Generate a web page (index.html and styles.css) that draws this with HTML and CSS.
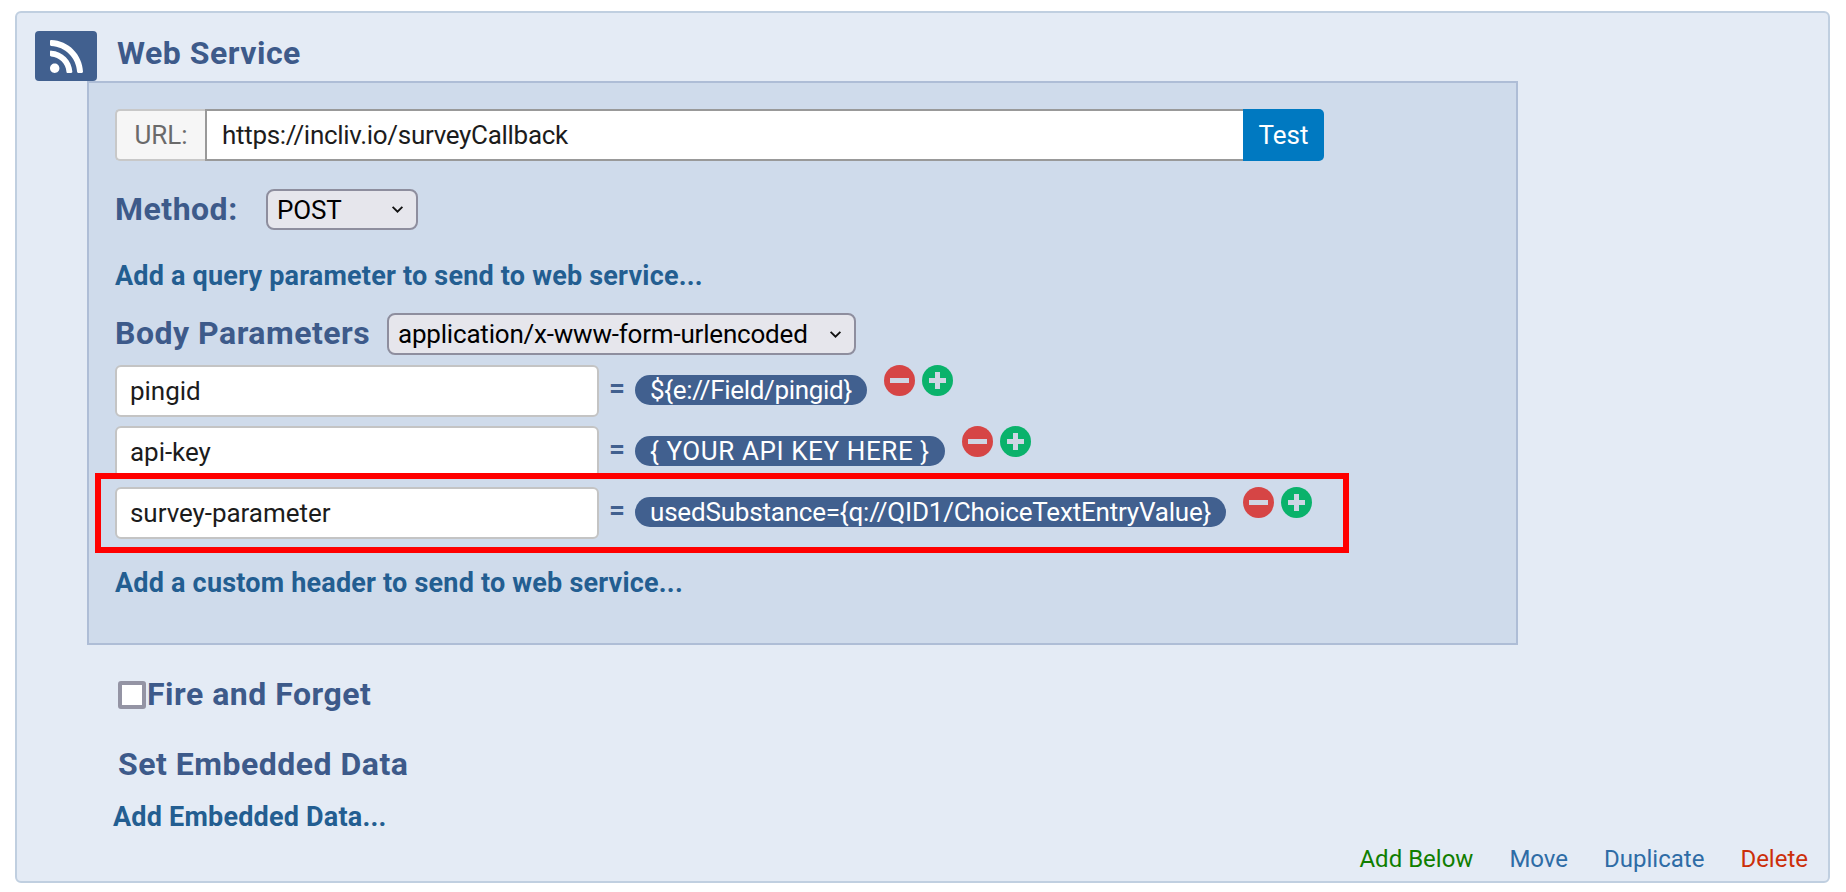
FILE: index.html
```html
<!DOCTYPE html>
<html lang="en">
<head>
<meta charset="utf-8">
<title>Web Service</title>
<link rel="stylesheet" href="styles.css">
</head>
<body>
<section class="card">
  <header class="card-head">
    <span class="logo"><svg viewBox="0 32 448 448" width="33" height="33"><path fill="#fff" d="M128.081 415.959c0 35.369-28.672 64.041-64.041 64.041S0 451.328 0 415.959s28.672-64.041 64.041-64.041 64.04 28.673 64.04 64.041zm175.66 47.25c-8.354-154.6-132.185-278.587-286.95-286.95C7.656 175.765 0 183.105 0 192.253v48.069c0 8.415 6.49 15.472 14.887 16.018 111.832 7.284 201.473 96.702 208.772 208.772.547 8.397 7.604 14.887 16.018 14.887h48.069c9.149.001 16.489-7.655 15.995-16.79zm144.249.288C439.596 229.677 251.465 40.445 16.503 32.01 7.473 31.686 0 38.981 0 48.016v48.068c0 8.625 6.835 15.645 15.453 15.999 191.179 7.839 344.627 161.316 352.465 352.465.353 8.618 7.373 15.453 15.999 15.453h48.068c9.034-.001 16.329-7.474 16.005-16.504z"/></svg></span>
    <h1 class="title">Web Service</h1>
  </header>
  <div class="panel">
    <div class="url-row">
      <span class="url-label">URL:</span>
      <span class="url-input">https://incliv.io/surveyCallback</span>
      <span class="test-btn">Test</span>
    </div>
    <div class="method-row">
      <span class="heading">Method:</span>
      <span class="select select-method">POST<svg class="chev" viewBox="0 0 12 8" width="13" height="9"><path d="M1.5 1.5 6 6l4.5-4.5" fill="none" stroke="#111" stroke-width="1.7"/></svg></span>
    </div>
    <a class="link link-query">Add a query parameter to send to web service...</a>
    <div class="body-row">
      <span class="heading">Body Parameters</span>
      <span class="select select-body">application/x-www-form-urlencoded<svg class="chev" viewBox="0 0 12 8" width="13" height="9"><path d="M1.5 1.5 6 6l4.5-4.5" fill="none" stroke="#111" stroke-width="1.7"/></svg></span>
    </div>
    <div class="param">
      <span class="param-name">pingid</span>
      <span class="eq">=</span>
      <span class="pill pill-field">${e://Field/pingid}</span>
      <span class="ctrl"><span class="round minus"></span><span class="round plus"></span></span>
    </div>
    <div class="param">
      <span class="param-name">api-key</span>
      <span class="eq">=</span>
      <span class="pill pill-caps">{ YOUR API KEY HERE }</span>
      <span class="ctrl"><span class="round minus"></span><span class="round plus"></span></span>
    </div>
    <div class="param param-marked">
      <span class="marker"></span>
      <span class="param-name">survey-parameter</span>
      <span class="eq">=</span>
      <span class="pill">usedSubstance={q://QID1/ChoiceTextEntryValue}</span>
      <span class="ctrl"><span class="round minus"></span><span class="round plus"></span></span>
    </div>
    <a class="link link-header">Add a custom header to send to web service...</a>
  </div>
  <label class="fire"><span class="check"></span><span class="fire-text">Fire and Forget</span></label>
  <h2 class="set-data">Set Embedded Data</h2>
  <a class="link link-data">Add Embedded Data...</a>
  <footer class="actions">
    <a class="act act-add">Add Below</a>
    <a class="act act-move">Move</a>
    <a class="act act-dup">Duplicate</a>
    <a class="act act-del">Delete</a>
  </footer>
</section>
</body>
</html>
```

FILE: styles.css
```css
* { box-sizing: border-box; }
html, body { margin: 0; background: #fff; }
body {
  padding: 11px 16px 9px 15px;
  font-family: Roboto, "Noto Sans", "Liberation Sans", sans-serif;
  color: #111;
}
.card {
  height: 872px;
  background: #e4ebf5;
  border: 2px solid #c0cfe0;
  border-radius: 6px;
  padding: 18px 0 0 18px;
  position: relative;
}
.card-head { display: flex; align-items: center; height: 50px; }
.logo {
  width: 62px; height: 50px;
  background: #41608f;
  border-radius: 4px;
  display: flex; align-items: center; justify-content: center;
}
.title {
  margin: 0 0 6px 20px;
  font-size: 32px; font-weight: 700; color: #3d5a8a; line-height: 1; letter-spacing: .5px;
}
.panel {
  width: 1431px;
  height: 564px;
  margin-left: 52px;
  background: #cfdbeb;
  border: 2px solid #aebdd6;
  padding: 26px 0 0 26px;
}
.url-row { display: flex; width: 1209px; height: 52px; }
.url-label {
  width: 90px;
  background: #f6f6f6;
  border: 2px solid #c8c8c8;
  border-right: 0;
  border-radius: 5px 0 0 5px;
  color: #6a6a6a;
  font-size: 26px;
  display: flex; align-items: center; justify-content: center;
}
.url-input {
  flex: 1;
  background: #fff;
  border: 2px solid #999;
  border-right: 0;
  padding-left: 15px;
  font-size: 26px; letter-spacing: -.3px;
  display: flex; align-items: center;
  color: #1c1c1c;
}
.test-btn {
  width: 81px;
  background: #0079c1;
  color: #fff;
  border-radius: 0 5px 5px 0;
  font-size: 26px;
  display: flex; align-items: center; justify-content: center;
}
.method-row { display: flex; align-items: center; margin-top: 28px; height: 41px; }
.heading { font-size: 32px; font-weight: 700; color: #3d5a8a; line-height: 1; letter-spacing: .5px; margin-top: -2px; }
.method-row .heading { width: 151px; }
.body-row .heading { width: 272px; }
.select {
  display: flex; align-items: center; justify-content: space-between;
  background: #e6e6ec;
  border: 2px solid #8e8e9e;
  border-radius: 8px;
  color: #000;
  font-size: 26px; letter-spacing: -.2px;
  padding: 0 12px 0 9px;
}
.select-method { width: 152px; height: 41px; }
.select-body { width: 469px; height: 42px; }
.chev { flex: none; }
.link { display: block; font-size: 27px; font-weight: 700; color: #235e91; line-height: 30px; letter-spacing: .2px; }
.link-query { margin-top: 31px; }
.body-row { display: flex; align-items: center; margin-top: 22px; height: 42px; }
.param { display: flex; align-items: flex-start; height: 51px; margin-top: 10px; position: relative; }
.body-row + .param { margin-top: 10px; }
.param-name {
  width: 484px; height: 52px;
  background: #fff;
  border: 2px solid #c4c4c4;
  border-radius: 6px;
  padding-left: 13px;
  font-size: 26px; letter-spacing: -.05px;
  display: flex; align-items: center;
  color: #1c1c1c;
}
.eq { width: 36px; margin-top: 8px; text-align: center; font-size: 28px; font-weight: 700; color: #41608f; line-height: 30px; }
.pill {
  height: 30px; margin-top: 10px;
  background: #41608f;
  color: #fff;
  border-radius: 15px;
  padding: 0 15px;
  font-size: 26px; line-height: 30px; letter-spacing: -.2px;
  white-space: nowrap;
}
.pill-field { letter-spacing: -.32px; }
.pill-caps { letter-spacing: .6px; }
.ctrl { display: flex; gap: 7px; margin-left: 17px; }
.round { width: 31px; height: 31px; border-radius: 50%; position: relative; display: block; }
.minus { background: #d64545; }
.plus { background: #0ab26b; }
.round::before, .plus::after {
  content: ""; position: absolute; background: #cfd6e4;
  left: 6px; top: 13px; width: 19px; height: 5px;
}
.plus::before { left: 7px; width: 17px; }
.plus::after { left: 13px; top: 7px; width: 5px; height: 17px; }
.marker {
  position: absolute;
  left: -20px; top: -14px;
  width: 1254px; height: 80px;
  border: 6px solid #f00;
  pointer-events: none;
  z-index: 2;
}
.link-header { margin-top: 30px; }
.fire { display: flex; align-items: center; margin: 36px 0 0 83px; height: 28px; }
.check { flex: none; width: 28px; height: 28px; background: #fff; border: 4px solid #9494a4; border-radius: 3px; }
.fire-text { font-size: 32px; font-weight: 700; color: #3d5a8a; line-height: 1; margin-left: 1px; letter-spacing: .5px; margin-top: -2px; }
.set-data { margin: 38px 0 0 83px; font-size: 32px; font-weight: 700; color: #3d5a8a; line-height: 35px; letter-spacing: .5px; }
.link-data { margin: 20px 0 0 78px; }
.actions {
  position: absolute; right: 20px; bottom: 7px;
  display: flex; gap: 36px;
  font-size: 24px; line-height: 30px;
}
.act-add { color: #107e00; }
.act-move, .act-dup { color: #2e6ca6; }
.act-del { color: #cc2f0a; }
```
